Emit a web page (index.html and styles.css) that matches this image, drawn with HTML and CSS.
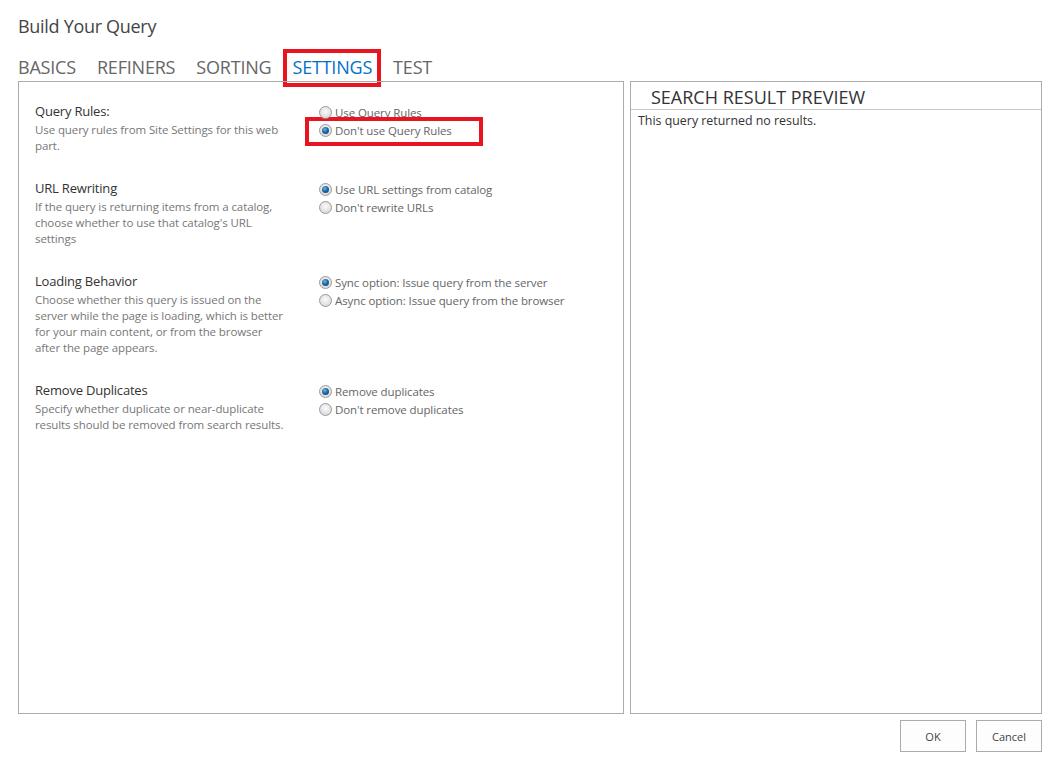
FILE: index.html
```html
<!DOCTYPE html>
<html>
	<head>
		<meta charset="UTF-8">
		<title>Build Your Query</title>
		<link rel="stylesheet" href="styles.css">
	</head>
	<body>
		<h1 class="title">Build Your Query</h1>
		<div class="tabs">
			<span class="tab">BASICS</span>
			<span class="tab">REFINERS</span>
			<span class="tab">SORTING</span>
			<span class="tab current marked">SETTINGS</span>
			<span class="tab">TEST</span>
		</div>
		<div class="panels">
			<div class="settings">
				<div class="section">
					<div class="info">
						<div class="name">Query Rules:</div>
						<div class="desc">Use query rules from Site Settings for this web part.</div>
					</div>
					<div class="options">
						<div class="option"><span class="radio"></span>Use Query Rules</div>
						<div class="option marked"><span class="radio on"></span>Don't use Query Rules</div>
					</div>
				</div>
				<div class="section">
					<div class="info">
						<div class="name">URL Rewriting</div>
						<div class="desc">If the query is returning items from a catalog, choose whether to use that catalog's URL settings</div>
					</div>
					<div class="options">
						<div class="option"><span class="radio on"></span>Use URL settings from catalog</div>
						<div class="option"><span class="radio"></span>Don't rewrite URLs</div>
					</div>
				</div>
				<div class="section">
					<div class="info">
						<div class="name">Loading Behavior</div>
						<div class="desc">Choose whether this query is issued on the server while the page is loading, which is better for your main content, or from the browser after the page appears.</div>
					</div>
					<div class="options">
						<div class="option"><span class="radio on"></span>Sync option: Issue query from the server</div>
						<div class="option"><span class="radio"></span>Async option: Issue query from the browser</div>
					</div>
				</div>
				<div class="section">
					<div class="info">
						<div class="name">Remove Duplicates</div>
						<div class="desc">Specify whether duplicate or near-duplicate results should be removed from search results.</div>
					</div>
					<div class="options">
						<div class="option"><span class="radio on"></span>Remove duplicates</div>
						<div class="option"><span class="radio"></span>Don't remove duplicates</div>
					</div>
				</div>
			</div>
			<div class="preview">
				<div class="preview_head">SEARCH RESULT PREVIEW</div>
				<div class="preview_body">This query returned no results.</div>
			</div>
		</div>
		<div class="buttons">
			<button class="btn">OK</button>
			<button class="btn">Cancel</button>
		</div>
	</body>
</html>
```

FILE: styles.css
```css
*{
	margin: 0;
	padding: 0;
	box-sizing: border-box;
}
body{
	width: 1059px;
	padding: 0 17px 0 18px;
	font-family: "Open Sans", "Noto Sans", sans-serif;
	color: #444;
	background: #fff;
}
.title{
	font-size: 18px;
	font-weight: normal;
	line-height: 24px;
	letter-spacing: -0.3px;
	padding-top: 14px;
	color: #444;
}
.tabs{
	display: flex;
	gap: 21px;
	margin-top: 17px;
	height: 26px;
}
.tab{
	font-size: 18px;
	line-height: 24px;
	letter-spacing: -0.2px;
	color: #666;
}
.tab.current{
	color: #0072c6;
}
/* red annotation frames */
.tab.marked{
	padding: 2px 5px;
	margin: -2px -5px;
	outline: 4px solid #e8141f;
}
.panels{
	display: flex;
	gap: 6px;
	height: 633px;
}
.settings{
	width: 606px;
	border: 1px solid #ababab;
	padding: 20px 16px;
}
.section{
	display: flex;
	margin-bottom: 25px;
}
.info{
	width: 284px;
}
.name{
	font-size: 13px;
	line-height: 18px;
	letter-spacing: -0.2px;
	margin-bottom: 2px;
	color: #333;
}
.desc{
	width: 252px;
	font-size: 11.5px;
	line-height: 16px;
	letter-spacing: -0.1px;
	color: #777;
}
.options{
	padding-top: 1px;
}
.option{
	display: flex;
	align-items: center;
	height: 18px;
	font-size: 11.5px;
	letter-spacing: -0.1px;
	color: #666;
}
.option.marked{
	width: fit-content;
	height: 21px;
	padding: 0 27px 3px 10px;
	margin: 0 -27px -3px -10px;
	outline: 4px solid #e8141f;
}
.radio{
	width: 13px;
	height: 13px;
	border-radius: 50%;
	border: 1px solid #9a9a9a;
	background: radial-gradient(circle at 50% 40%, #fbfbfb 0%, #e2e2e2 60%, #cfcfcf 100%);
	margin-right: 3px;
	position: relative;
	flex-shrink: 0;
}
.radio.on:after{
	content: "";
	position: absolute;
	left: 2px;
	top: 2px;
	width: 7px;
	height: 7px;
	border-radius: 50%;
	background: radial-gradient(circle at 40% 35%, #6cb6ea 0%, #1d6aa5 45%, #0f3e66 100%);
}
.preview{
	width: 412px;
	border: 1px solid #ababab;
}
.preview_head{
	font-size: 18px;
	line-height: 24px;
	color: #333;
	padding: 3px 0 0 20px;
	border-bottom: 1px solid #c6c6c6;
}
.preview_body{
	font-size: 12.4px;
	line-height: 16px;
	color: #333;
	padding: 3px 7px;
}
.buttons{
	display: flex;
	justify-content: flex-end;
	gap: 10px;
	margin-top: 6px;
}
.btn{
	width: 66px;
	height: 32px;
	border: 1px solid #ababab;
	background: #fdfdfd;
	font-family: "Open Sans", "Noto Sans", sans-serif;
	font-size: 11px;
	color: #444;
}
```
